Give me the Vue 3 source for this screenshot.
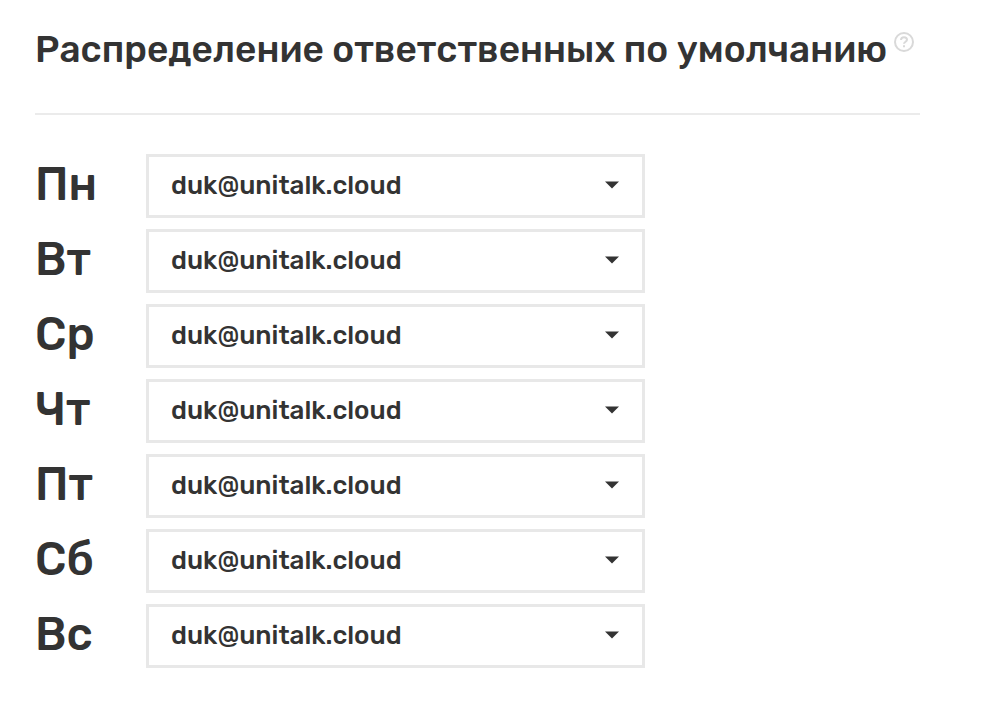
<script setup>
import { ref } from "vue";

const USERS = ["duk@unitalk.cloud"];

const days = ref([
  { id: "mon", label: "Пн", user: USERS[0] },
  { id: "tue", label: "Вт", user: USERS[0] },
  { id: "wed", label: "Ср", user: USERS[0] },
  { id: "thu", label: "Чт", user: USERS[0] },
  { id: "fri", label: "Пт", user: USERS[0] },
  { id: "sat", label: "Сб", user: USERS[0] },
  { id: "sun", label: "Вс", user: USERS[0] }
]);
</script>

<template>
  <section class="panel">
    <header class="panel-head">
      <h1 class="title">Распределение ответственных по умолчанию</h1>
      <button class="help" type="button" aria-label="Справка">
        <svg viewBox="0 0 22 22" width="22" height="22" fill="none" stroke="#d9d9d9" stroke-width="2">
          <circle cx="11" cy="11" r="9" />
          <path d="M8 9C8 7.200 9.300 6.200 11 6.200s3 1 3 2.600c0 1.900-3 2.100-3 4" />
          <path d="M11 14.300v2" />
        </svg>
      </button>
    </header>

    <div class="days">
      <div v-for="d in days" :key="d.id" class="day-row">
        <label class="day-label" :for="'day-' + d.id">{{ d.label }}</label>
        <div class="select-wrap">
          <select :id="'day-' + d.id" v-model="d.user" class="day-select">
            <option v-for="u in USERS" :key="u" :value="u">{{ u }}</option>
          </select>
          <svg class="caret" viewBox="0 0 16 8" width="16" height="8">
            <path d="M1 0.500h14L8 7.500z" fill="#333" />
          </svg>
        </div>
      </div>
    </div>
  </section>
</template>

<style>
body {
  background: #fff;
}
</style>

<style scoped>
.panel {
  padding: 28px 87px 36px 35px;
  font-family: Rubik, Inter, Roboto, sans-serif;
  color: #333;
}
.panel-head {
  display: flex;
  align-items: flex-start;
  gap: 6px;
  padding-bottom: 43px;
  border-bottom: 2px solid #ebebeb;
}
.title {
  margin: 0;
  font-size: 37px;
  line-height: 42px;
  font-weight: 500;
  white-space: nowrap;
}
.help {
  display: flex;
  margin-top: 3px;
  padding: 0;
  border: 0;
  background: none;
  cursor: pointer;
}
.days {
  display: flex;
  flex-direction: column;
  gap: 11px;
  padding-top: 39px;
}
.day-row {
  display: grid;
  grid-template-columns: 111px minmax(0, 499px);
  align-items: center;
}
.day-label {
  padding-bottom: 3px;
  font-size: 46px;
  line-height: 60px;
  font-weight: 500;
}
.select-wrap {
  position: relative;
}
.day-select {
  display: block;
  width: 100%;
  height: 64px;
  padding: 0 60px 2px 22px;
  border: 3px solid #e8e8e8;
  border-radius: 0;
  background: #fff;
  color: #333;
  font-family: inherit;
  font-size: 26px;
  font-weight: 500;
  appearance: none;
}
.caret {
  position: absolute;
  top: 27px;
  right: 25px;
  pointer-events: none;
}
</style>
